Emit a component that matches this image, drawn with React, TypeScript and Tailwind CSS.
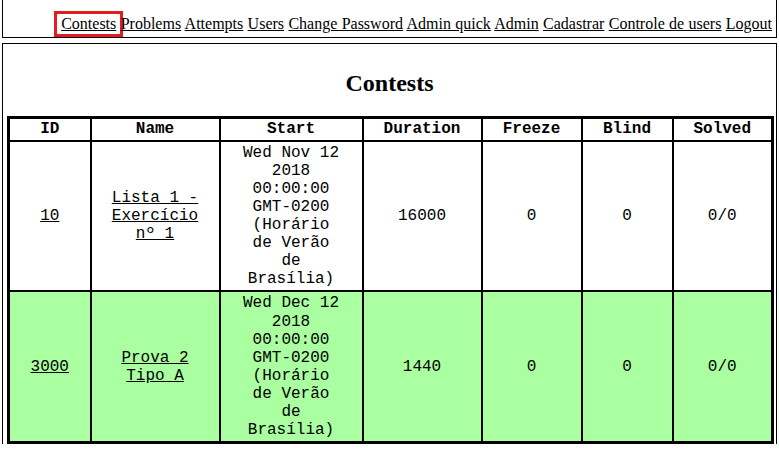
const links = [
  "Contests",
  "Problems",
  "Attempts",
  "Users",
  "Change Password",
  "Admin quick",
  "Admin",
  "Cadastrar",
  "Controle de users",
  "Logout",
];

const contests = [
  {
    id: "10",
    name: "Lista 1 - Exercício nº 1",
    start: "Wed Nov 12 2018 00:00:00 GMT-0200 (Horário de Verão de Brasília)",
    duration: "16000",
    freeze: "0",
    blind: "0",
    solved: "0/0",
    green: false,
  },
  {
    id: "3000",
    name: "Prova 2 Tipo A",
    start: "Wed Dec 12 2018 00:00:00 GMT-0200 (Horário de Verão de Brasília)",
    duration: "1440",
    freeze: "0",
    blind: "0",
    solved: "0/0",
    green: true,
  },
];

const headers = ["ID", "Name", "Start", "Duration", "Freeze", "Blind", "Solved"];

export default function App() {
  return (
    <div className="min-h-[458px] bg-white font-['Liberation_Serif','Times_New_Roman',serif] text-black">
      <div className="mx-[2px] h-[38px] border-x border-b border-black pt-[15px] pr-[4px] text-right text-[16px] leading-[18.4px] [word-spacing:0.35px]">
        {links.map((l, i) => (
          <span key={l}>
            {i > 0 && " "}
            <a href="#" className="relative underline">
              {l}
              {i === 0 && (
                <span className="pointer-events-none absolute -top-[4px] -right-[7px] -bottom-[5px] -left-[7px] border-[3px] border-[#e31b23]" />
              )}
            </a>
          </span>
        ))}
      </div>

      <div className="mx-[2px] mt-[5px] border-x border-t border-black px-[4px] pt-[4px]">
        <h2 className="mt-[22px] mb-[18px] text-center text-[24px] leading-[27.6px] font-bold">
          Contests
        </h2>
        <table className="w-full table-fixed border-collapse border-[3px] border-black font-['Liberation_Mono','Courier_New',monospace] text-[16px] leading-[18.1px]">
          <colgroup>
            <col className="w-[82px]" />
            <col className="w-[129px]" />
            <col className="w-[143px]" />
            <col className="w-[119px]" />
            <col className="w-[100px]" />
            <col className="w-[91px]" />
            <col className="w-[100px]" />
          </colgroup>
          <thead>
            <tr>
              {headers.map((h) => (
                <th key={h} className="border-2 border-black px-[1px] py-[1.5px] text-center font-bold">
                  {h}
                </th>
              ))}
            </tr>
          </thead>
          <tbody>
            {contests.map((c) => (
              <tr key={c.id} className={c.green ? "bg-[#aaffa0]" : "bg-white"}>
                <td className="border-2 border-black px-[1px] py-[2px] text-center align-middle">
                  <a href="#" className="underline">{c.id}</a>
                </td>
                <td className="border-2 border-black px-[1px] py-[2px] text-center align-middle">
                  <div className="mx-auto w-[100px]">
                    <a href="#" className="underline">{c.name}</a>
                  </div>
                </td>
                <td className="border-2 border-black px-[1px] py-[2px] text-center align-middle">
                  <div className="mx-auto w-[100px]">{c.start}</div>
                </td>
                <td className="border-2 border-black px-[1px] py-[2px] text-center align-middle">{c.duration}</td>
                <td className="border-2 border-black px-[1px] py-[2px] text-center align-middle">{c.freeze}</td>
                <td className="border-2 border-black px-[1px] py-[2px] text-center align-middle">{c.blind}</td>
                <td className="border-2 border-black px-[1px] py-[2px] text-center align-middle">{c.solved}</td>
              </tr>
            ))}
          </tbody>
        </table>
      </div>
    </div>
  );
}
